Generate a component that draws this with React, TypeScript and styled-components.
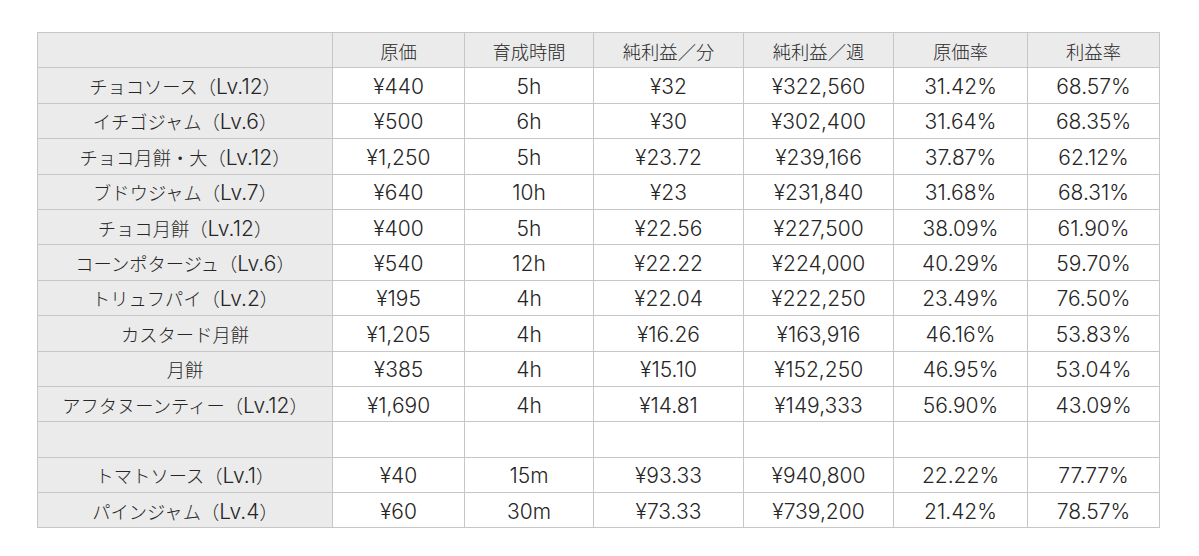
import React from 'react';
import styled, { createGlobalStyle } from 'styled-components';

const GlobalStyle = createGlobalStyle`
  html, body {
    margin: 0;
    padding: 0;
    background: #ffffff;
  }
  body {
    font-family: Inter, "Liberation Sans", "Noto Sans CJK JP", sans-serif;
    color: #262626;
  }
`;

type Row = [string, string, string, string, string, string, string] | null;

const headers = ['原価', '育成時間', '純利益／分', '純利益／週', '原価率', '利益率'];
const widths = [295, 132, 129, 150, 150, 134, 132];

const rows: Row[] = [
  ['チョコソース（Lv.12）', '¥440', '5h', '¥32', '¥322,560', '31.42%', '68.57%'],
  ['イチゴジャム（Lv.6）', '¥500', '6h', '¥30', '¥302,400', '31.64%', '68.35%'],
  ['チョコ月餅・大（Lv.12）', '¥1,250', '5h', '¥23.72', '¥239,166', '37.87%', '62.12%'],
  ['ブドウジャム（Lv.7）', '¥640', '10h', '¥23', '¥231,840', '31.68%', '68.31%'],
  ['チョコ月餅（Lv.12）', '¥400', '5h', '¥22.56', '¥227,500', '38.09%', '61.90%'],
  ['コーンポタージュ（Lv.6）', '¥540', '12h', '¥22.22', '¥224,000', '40.29%', '59.70%'],
  ['トリュフパイ（Lv.2）', '¥195', '4h', '¥22.04', '¥222,250', '23.49%', '76.50%'],
  ['カスタード月餅', '¥1,205', '4h', '¥16.26', '¥163,916', '46.16%', '53.83%'],
  ['月餅', '¥385', '4h', '¥15.10', '¥152,250', '46.95%', '53.04%'],
  ['アフタヌーンティー（Lv.12）', '¥1,690', '4h', '¥14.81', '¥149,333', '56.90%', '43.09%'],
  null,
  ['トマトソース（Lv.1）', '¥40', '15m', '¥93.33', '¥940,800', '22.22%', '77.77%'],
  ['パインジャム（Lv.4）', '¥60', '30m', '¥73.33', '¥739,200', '21.42%', '78.57%'],
];

const Page = styled.div`
  padding: 32px 0 0 37px;
`;

const Table = styled.table`
  border-collapse: collapse;
  table-layout: fixed;
  width: 1122px;
  font-size: 21px;
  font-weight: 300;
  line-height: 1;
`;

const Cell = styled.td<{ $shade?: boolean }>`
  height: 32.4px;
  padding: 2px 0 0;
  border: 1px solid #c6c6c6;
  background: ${(p) => (p.$shade ? '#ebebeb' : '#ffffff')};
  text-align: center;
  vertical-align: middle;
  white-space: nowrap;
  color: #262626;
`;

const HeadCell = styled(Cell).attrs({ as: 'th' })`
  font-weight: 300;
  background: #ebebeb;
`;

// Japanese runs are set a little smaller than the Latin digits
const Kana = styled.span`
  font-family: "Noto Sans CJK JP", sans-serif;
  font-size: 0.87em;
  font-weight: 300;
`;

const cjk = /([\u3000-\u30ff\u4e00-\u9fff\uff00-\uffef]+)/;

const Mixed = ({ text }: { text: string }) => (
  <>
    {text.split(cjk).map((part, i) =>
      part === '' ? null : cjk.test(part) ? <Kana key={i}>{part}</Kana> : <span key={i}>{part}</span>
    )}
  </>
);

export default function App() {
  return (
    <>
      <GlobalStyle />
      <Page>
        <Table>
          <colgroup>
            {widths.map((w, i) => (
              <col key={i} style={{ width: w }} />
            ))}
          </colgroup>
          <thead>
            <tr>
              <HeadCell />
              {headers.map((h) => (
                <HeadCell key={h}>
                  <Mixed text={h} />
                </HeadCell>
              ))}
            </tr>
          </thead>
          <tbody>
            {rows.map((r, i) =>
              r ? (
                <tr key={i}>
                  {r.map((v, j) => (
                    <Cell key={j} $shade={j === 0}>
                      <Mixed text={v} />
                    </Cell>
                  ))}
                </tr>
              ) : (
                <tr key={i}>
                  {widths.map((_, j) => (
                    <Cell key={j} $shade={j === 0} />
                  ))}
                </tr>
              )
            )}
          </tbody>
        </Table>
      </Page>
    </>
  );
}
